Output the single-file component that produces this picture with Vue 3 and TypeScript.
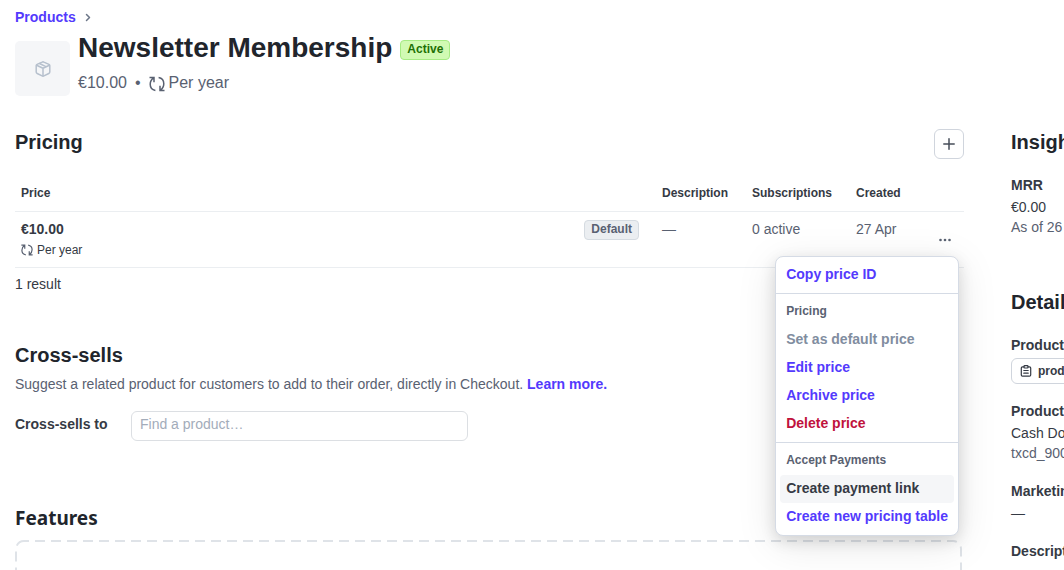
<script setup lang="ts">
import { ref } from 'vue'

interface MenuItem {
  label: string
  kind?: 'disabled' | 'danger' | 'hovered'
}
interface MenuGroup {
  title?: string
  items: MenuItem[]
}

const search = ref('')
const menu: MenuGroup[] = [
  { items: [{ label: 'Copy price ID' }] },
  {
    title: 'Pricing',
    items: [
      { label: 'Set as default price', kind: 'disabled' },
      { label: 'Edit price' },
      { label: 'Archive price' },
      { label: 'Delete price', kind: 'danger' },
    ],
  },
  {
    title: 'Accept Payments',
    items: [{ label: 'Create payment link', kind: 'hovered' }, { label: 'Create new pricing table' }],
  },
]
</script>

<template>
  <div class="page">
    <main class="main">
      <nav class="crumbs" aria-label="Breadcrumb">
        <a href="#">Products</a>
        <svg width="8" height="10" viewBox="0 0 8 10" fill="none" stroke="#6c7688" stroke-width="1.5" stroke-linecap="round" stroke-linejoin="round"><path d="M2.5 2.500 5.500 5.500 2.500 8.500" /></svg>
      </nav>

      <header class="product">
        <div class="thumb">
          <svg width="16" height="16" viewBox="0 0 16 16" fill="none" stroke="#b6c0cd" stroke-width="1.5" stroke-linejoin="round" stroke-linecap="round">
            <path d="M7.1 1.1a2 2 0 0 1 1.8 0l5 2.3a1.5 1.5 0 0 1 .9 1.4v6.2a1.7 1.7 0 0 1-1 1.5l-4.9 2.4a2 2 0 0 1-1.8 0l-4.9-2.4a1.7 1.7 0 0 1-1-1.5V4.8a1.5 1.5 0 0 1 .9-1.4z" />
            <path d="M1.6 4.3 8 7.3l6.4-3M8 7.3v7.5M4.5 2.5l6.4 3.2" />
          </svg>
        </div>
        <div>
          <div class="title-row">
            <h1>Newsletter Membership</h1>
            <span class="badge badge-active">Active</span>
          </div>
          <p class="subtitle">
            <span>€10.00</span><span class="dot">•</span>
            <svg class="recur" width="16" height="16" viewBox="0 0 16 16" fill="none" stroke="currentColor" stroke-width="1.5">
              <path d="M.5 1.5H5v4.700M4.800 1.700C2.400 3.400 1.200 5.500 1.200 8.200c0 3.300 2 5.600 5.200 6.200M15.500 14.500H11V9.800M11.200 14.300c2.400-1.700 3.600-3.800 3.600-6.500 0-3.300-2-5.600-5.200-6.200" />
            </svg>
            <span>Per year</span>
          </p>
        </div>
      </header>

      <section>
        <div class="section-head">
          <h2>Pricing</h2>
          <button class="add" type="button" aria-label="Add price">
            <svg width="12" height="12" viewBox="0 0 12 12" stroke="#474e5a" stroke-width="1.5" stroke-linecap="round"><path d="M6 .8v10.400M.8 6h10.400" /></svg>
          </button>
        </div>
        <table>
          <colgroup>
            <col />
            <col class="col-desc" />
            <col class="col-subs" />
            <col class="col-created" />
            <col class="col-actions" />
          </colgroup>
          <thead>
            <tr>
              <th>Price</th>
              <th>Description</th>
              <th>Subscriptions</th>
              <th>Created</th>
              <th></th>
            </tr>
          </thead>
          <tbody>
            <tr>
              <td class="price-cell">
                <div class="price-row">
                  <div class="price">
                    <strong>€10.00</strong>
                    <span class="interval">
                      <svg width="12" height="12" viewBox="0 0 16 16" fill="none" stroke="#596171" stroke-width="1.6">
                        <path d="M.5 1.5H5v4.700M4.800 1.700C2.400 3.400 1.200 5.500 1.200 8.200c0 3.300 2 5.600 5.200 6.200M15.500 14.500H11V9.800M11.200 14.300c2.400-1.700 3.600-3.800 3.600-6.500 0-3.300-2-5.600-5.200-6.200" />
                      </svg>
                      Per year
                    </span>
                  </div>
                  <span class="badge badge-default">Default</span>
                </div>
              </td>
              <td>—</td>
              <td>0 active</td>
              <td>27 Apr</td>
              <td class="actions">
                <div class="menu-anchor">
                  <button class="more" type="button" aria-label="Price actions" aria-expanded="true">
                    <svg width="12" height="4" viewBox="0 0 12 4" fill="#596171"><circle cx="1.5" cy="2" r="1.3" /><circle cx="6" cy="2" r="1.3" /><circle cx="10.5" cy="2" r="1.3" /></svg>
                  </button>
                  <div class="menu" role="menu">
                    <div v-for="(group, i) in menu" :key="i" class="group">
                      <div v-if="group.title" class="group-title">{{ group.title }}</div>
                      <button
                        v-for="item in group.items"
                        :key="item.label"
                        class="item"
                        :class="item.kind"
                        :disabled="item.kind === 'disabled'"
                        type="button"
                        role="menuitem"
                      >{{ item.label }}</button>
                    </div>
                  </div>
                </div>
              </td>
            </tr>
          </tbody>
        </table>
        <p class="result">1 result</p>
      </section>

      <section class="cross">
        <h2>Cross-sells</h2>
        <p class="hint">
          Suggest a related product for customers to add to their order, directly in Checkout.
          <a href="#">Learn more.</a>
        </p>
        <div class="field">
          <label for="cross-sell">Cross-sells to</label>
          <input id="cross-sell" v-model="search" type="text" placeholder="Find a product…" />
        </div>
      </section>

      <section class="features">
        <h2>Features</h2>
        <div class="dropzone">
          <svg width="100%" height="100%"><rect x="1" y="1" width="100%" height="100%" rx="8" /></svg>
        </div>
      </section>
    </main>

    <aside class="side">
      <h2>Insights</h2>
      <dl class="insights">
        <dt>MRR</dt>
        <dd>€0.00</dd>
        <dd class="soft">As of 26 Apr</dd>
      </dl>
      <h2>Details</h2>
      <dl class="details">
        <div>
          <dt>Product ID</dt>
          <dd class="id-row">
            <button class="copy" type="button">
              <svg width="12" height="12" viewBox="0 0 12 12" fill="none" stroke="#353a44" stroke-width="1.2" stroke-linecap="round"><path d="M4 1.800H2.500a1.200 1.200 0 0 0-1.200 1.200v7a1.200 1.200 0 0 0 1.200 1.200h7a1.200 1.200 0 0 0 1.200-1.200V3a1.200 1.200 0 0 0-1.200-1.200H8M3.800 5.500h4.400M3.800 8.200h4.400" /><rect x="4" y=".7" width="4" height="2.3" rx=".7" /></svg>
              prod_Q0newsletter
            </button>
          </dd>
        </div>
        <div>
          <dt>Product tax code</dt>
          <dd>Cash Donation</dd>
          <dd class="soft">txcd_90000001</dd>
        </div>
        <div>
          <dt>Marketing feature list</dt>
          <dd>—</dd>
        </div>
        <div>
          <dt>Description</dt>
        </div>
      </dl>
    </aside>
  </div>
</template>

<style>
body {
  margin: 0;
  background: #fff;
}
</style>

<style scoped>
.page {
  box-sizing: border-box;
  display: flex;
  gap: 47px;
  height: 100vh;
  padding: 7px 0 0 15px;
  overflow: hidden;
  color: #353a44;
  font: 14px/20px "Liberation Sans", Arial, sans-serif;
}
h1, h2, p, dl, dd {
  margin: 0;
}
h1 {
  color: #21252c;
  font-size: 28px;
  line-height: 36px;
}
h2 {
  color: #21252c;
  font-size: 20px;
  line-height: 28px;
}
a {
  color: #533afd;
  font-weight: 700;
  text-decoration: none;
}
button {
  box-sizing: border-box;
  margin: 0;
  padding: 0;
  border: 0;
  background: none;
  font: inherit;
  cursor: pointer;
}
svg {
  flex: none;
}
.main {
  flex: 1 1 0;
  min-width: 0;
}
.crumbs {
  display: flex;
  align-items: center;
  gap: 8px;
}
.product {
  display: flex;
  gap: 8px;
  margin-top: 3px;
}
.thumb {
  display: flex;
  align-items: center;
  justify-content: center;
  width: 55px;
  height: 55px;
  margin-top: 11px;
  border-radius: 5px;
  background: #f5f6f8;
}
.title-row {
  display: flex;
  align-items: center;
  gap: 8px;
}
.badge {
  box-sizing: border-box;
  height: 20px;
  padding: 0 6px;
  border: 1px solid;
  border-radius: 4px;
  font-size: 12px;
  font-weight: 700;
  line-height: 17px;
}
.badge-active {
  margin-top: 4px;
  border-color: #a6eb84;
  background: #d1fab3;
  color: #217005;
}
.badge-default {
  margin-top: 1px;
  border-color: #d5dbe1;
  background: #ebeef1;
  color: #596171;
}
.subtitle {
  display: flex;
  align-items: center;
  margin-top: 5px;
  color: #596171;
  font-size: 16px;
  line-height: 24px;
}
.dot {
  margin: 0 8px;
}
.recur {
  margin: 2px 4px 0 0;
}
.section-head {
  display: flex;
  align-items: flex-start;
  justify-content: space-between;
  margin-top: 33px;
}
.add {
  display: flex;
  align-items: center;
  justify-content: center;
  width: 30px;
  height: 30px;
  border: 1px solid #d0d5dd;
  border-radius: 6px;
  background: #fff;
}
.section-head h2 {
  margin-top: -1px;
}
table {
  width: 100%;
  margin-top: 16px;
  border-spacing: 0;
  table-layout: fixed;
}
.col-desc {
  width: 90px;
}
.col-subs {
  width: 104px;
}
.col-created {
  width: 74px;
}
.col-actions {
  width: 40px;
}
th {
  padding: 10px 6px;
  border-bottom: 1px solid #ebeef1;
  font-size: 12px;
  line-height: 16px;
  text-align: left;
}
td {
  padding: 7px 6px;
  border-bottom: 1px solid #ebeef1;
  color: #596171;
  vertical-align: top;
}
.price-cell {
  padding-right: 17px;
}
.price-row {
  display: flex;
  justify-content: space-between;
}
.price {
  display: flex;
  flex-direction: column;
  gap: 1px;
  color: #353a44;
}
.interval {
  display: flex;
  align-items: center;
  gap: 4px;
  font-size: 12px;
}
.actions {
  padding: 0 7px 0 9px;
  vertical-align: middle;
}
.menu-anchor {
  position: relative;
}
.more {
  display: flex;
  align-items: center;
  justify-content: center;
  width: 24px;
  height: 24px;
}
.menu {
  position: absolute;
  top: 28px;
  right: -2px;
  z-index: 1;
  border: 1px solid #d5dbe5;
  border-radius: 8px;
  background: #fff;
  box-shadow: 0 5px 15px rgba(0, 0, 0, 0.13), 0 8px 40px rgba(0, 0, 0, 0.1);
}
.group {
  padding: 4px;
}
.group + .group {
  border-top: 1px solid #d5dbe5;
}
.group-title {
  padding: 0 6px 2px;
  color: #596171;
  font-size: 12px;
  font-weight: 700;
  line-height: 26px;
}
.item {
  display: block;
  width: 100%;
  padding: 0 6px 2px;
  border-radius: 4px;
  color: #533afd;
  font-weight: 700;
  line-height: 26px;
  text-align: left;
  white-space: nowrap;
}
.item.disabled {
  color: #818da0;
}
.item.danger {
  color: #c0123c;
}
.item.hovered {
  background: #f5f6f8;
  color: #353a44;
}
.result {
  margin-top: 6px;
}
.cross {
  margin-top: 47px;
}
.hint {
  margin-top: 5px;
  color: #596171;
}
.field {
  display: flex;
  margin-top: 17px;
}
.field label {
  width: 116px;
  padding-top: 3px;
  font-weight: 700;
}
.field input {
  box-sizing: border-box;
  width: 337px;
  height: 30px;
  padding: 0 8px 4px;
  border: 1px solid #dcdfe3;
  border-radius: 6px;
  background: #fff;
  color: #353a44;
  font: inherit;
}
.field input::placeholder {
  color: #a3acba;
  opacity: 1;
}
.features {
  margin-top: 63px;
}
.features h2 {
  font-family: "Noto Sans", sans-serif;
  font-size: 19px;
}
.dropzone {
  height: 120px;
  margin-top: 8px;
  padding-right: 2px;
}
.dropzone svg {
  display: block;
  overflow: visible;
}
.dropzone rect {
  width: calc(100% - 2px);
  fill: none;
  stroke: #dfe3e8;
  stroke-width: 2;
  stroke-dasharray: 10 6;
  stroke-dashoffset: 5;
}
.side {
  flex: 0 0 53px;
  min-width: 0;
  padding-top: 121px;
  white-space: nowrap;
}
dt {
  font-weight: 700;
}
.soft {
  color: #596171;
}
.insights {
  margin: 19px 0 51px;
}
.insights dt,
.details dt {
  margin-bottom: 2px;
}
.details {
  display: flex;
  flex-direction: column;
  gap: 18px;
  margin-top: 19px;
}
.details .id-row {
  margin: 3px 0 -1px;
}
.copy {
  display: flex;
  align-items: center;
  gap: 6px;
  height: 26px;
  padding: 0 8px;
  border: 1px solid #d0d5dd;
  border-radius: 6px;
  color: #353a44;
  font-size: 12px;
  font-weight: 700;
}
</style>
